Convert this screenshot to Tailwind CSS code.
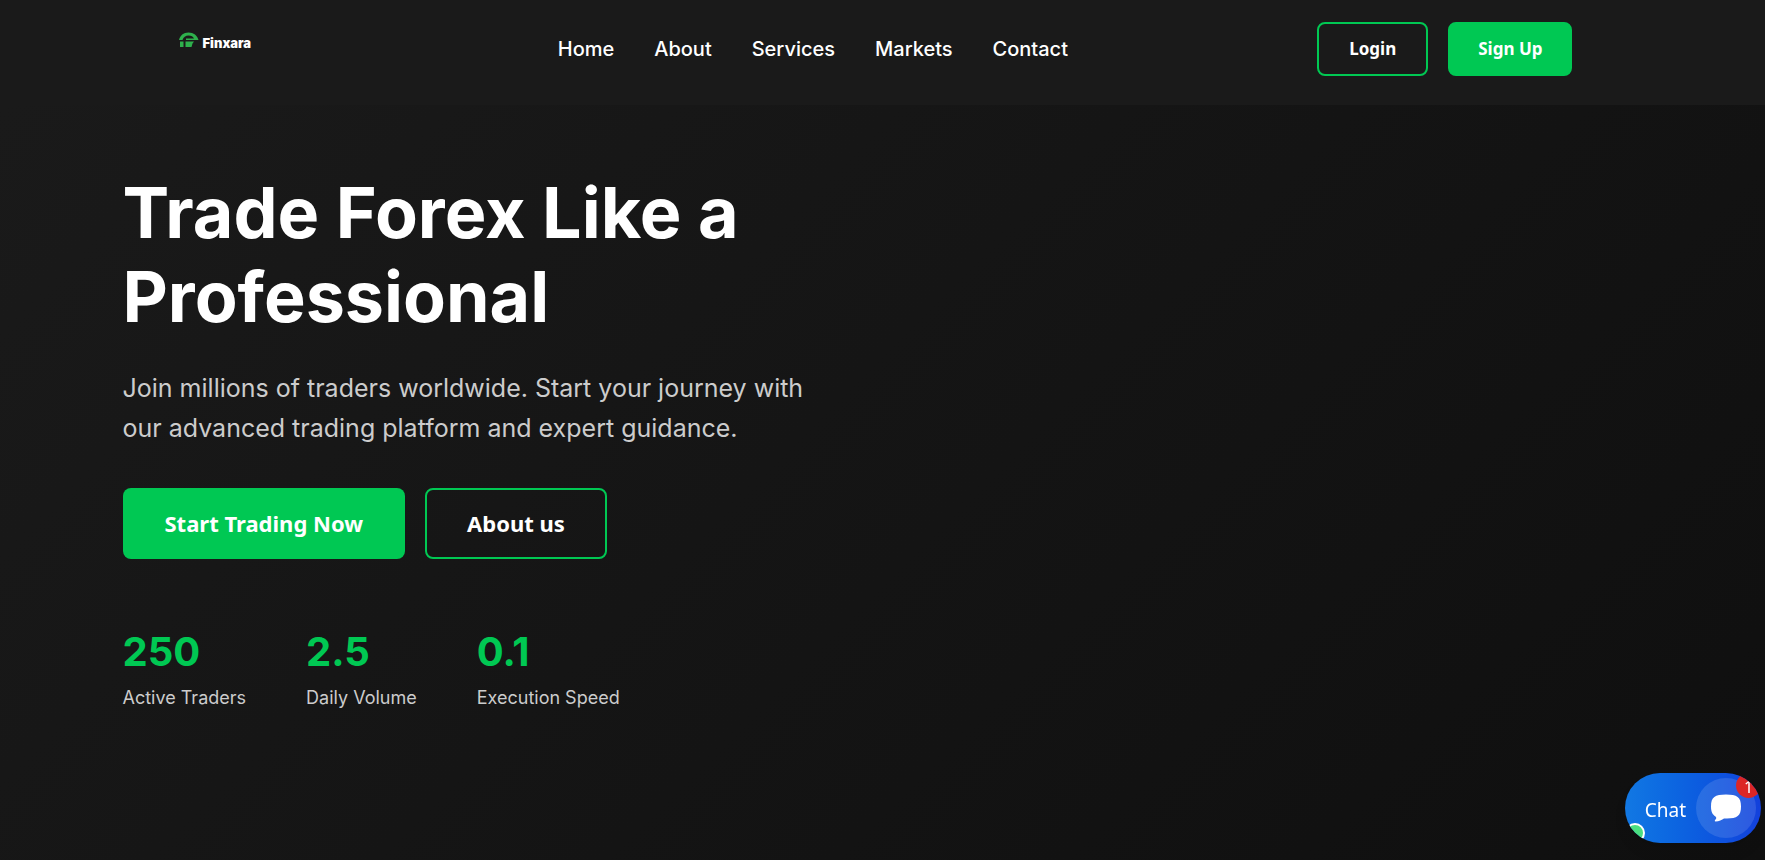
<!DOCTYPE html>
<html lang="en" class="h-full">
  <head>
    <meta charset="UTF-8" />
    <meta name="viewport" content="width=device-width, initial-scale=1.0" />
    <title>Finxara</title>
    <script src="https://cdn.jsdelivr.net/npm/@tailwindcss/browser@4"></script>
  </head>
  <body class="flex min-h-full flex-col bg-[#0f0f0f] font-['Inter',sans-serif] text-white">
    <header class="bg-[#1a1a1a]">
      <div class="mx-auto flex max-w-[1520px] items-center justify-between pt-[22px] pr-[70px] pb-[29px] pl-14">
        <a href="#" class="flex w-[130px] items-start gap-1 pb-4">
          <svg class="h-4 w-5" viewBox="0 0 20 16" fill="#2eb04c" aria-hidden="true">
            <path d="M0 8C1 3.500 4.500 0.500 9.500 0.500S18.500 3.500 19.500 8H7V6.500H15C14 4.500 12.500 3.500 9.500 3.500C6.500 3.500 4.500 5 3.500 8Z" />
            <path d="M1 9.500H4.500V15H1Z" />
            <path d="M6.500 9.500H15L13.500 11.500L12.500 15H6.500Z" />
          </svg>
          <span class="pt-[3px] text-[13px] leading-4 font-black">Finxara</span>
        </a>
        <nav class="flex items-center gap-10 text-xl leading-6 font-medium">
          <a href="#">Home</a>
          <a href="#about">About</a>
          <a href="#services">Services</a>
          <a href="#markets">Markets</a>
          <a href="#contact">Contact</a>
        </nav>
        <div class="flex gap-5 font-['Noto_Sans',sans-serif] text-[17px] font-bold">
          <button type="button" class="h-[54px] rounded-lg border-2 border-[#00c853] px-[30px]">Login</button>
          <button type="button" class="h-[54px] rounded-lg border-2 border-[#00c853] bg-[#00c853] px-7">Sign Up</button>
        </div>
      </div>
    </header>

    <main class="grow bg-linear-135 from-[#1a1a1a] to-[#0f0f0f]">
      <div class="mx-auto max-w-[1520px] pt-[66px]">
        <div class="max-w-[720px]">
          <h1 class="text-[70px] leading-[84px] font-bold">Trade Forex Like a Professional</h1>
          <p class="mt-[29px] text-[25px] leading-10 text-[#cccccc]">
            Join millions of traders worldwide. Start your journey with our advanced trading platform and expert guidance.
          </p>
          <div class="mt-10 flex gap-5 font-['Noto_Sans',sans-serif] text-[22px] font-bold">
            <button type="button" class="h-[71px] rounded-lg bg-[#00c853] px-[42px]">Start Trading Now</button>
            <button type="button" class="h-[71px] rounded-lg border-2 border-[#00c853] px-10">About us</button>
          </div>
          <dl class="mt-[61px] flex gap-[60px]">
            <div class="flex flex-col-reverse">
              <dt class="text-lg leading-7 text-[#cccccc]">Active Traders</dt>
              <dd class="text-[40px] leading-[64px] font-bold text-[#00c853]">250</dd>
            </div>
            <div class="flex flex-col-reverse">
              <dt class="text-lg leading-7 text-[#cccccc]">Daily Volume</dt>
              <dd class="text-[40px] leading-[64px] font-bold text-[#00c853]">2.5</dd>
            </div>
            <div class="flex flex-col-reverse">
              <dt class="text-lg leading-7 text-[#cccccc]">Execution Speed</dt>
              <dd class="text-[40px] leading-[64px] font-bold text-[#00c853]">0.1</dd>
            </div>
          </dl>
        </div>
      </div>
    </main>

    <!-- chat launcher -->
    <button type="button" class="fixed right-1 bottom-[17px] flex h-[70px] items-center gap-[10px] overflow-hidden rounded-full bg-linear-to-r from-[#1278e3] to-[#1340dc] pr-[5px] pl-5 shadow-lg">
      <span class="pt-1 font-['Noto_Sans',sans-serif] text-[19px]">Chat</span>
      <span class="flex size-[60px] items-center justify-center rounded-full bg-white/12">
        <svg class="h-7 w-[30px]" viewBox="0 0 30 28" fill="#fff" aria-hidden="true">
          <path d="M15 0.500C26 0.500 30 3 30 12.500C30 22 26 24.500 16 24.500H13C11 26 8 27.500 4.500 27.500C3.500 27.500 3.500 26.500 4.500 25.500C5.500 24.500 5.500 23.500 4.500 22.500C1.500 20.500 0 18 0 12.500C0 3 4 0.500 15 0.500Z" />
        </svg>
      </span>
      <span class="absolute top-0 right-0 flex size-[25px] items-center justify-center rounded-full bg-[#dc2626] pt-0.5 font-['Noto_Sans',sans-serif] text-base">1</span>
      <span class="absolute bottom-0 left-0 size-5 rounded-full border-2 border-white bg-[#4ade80]"></span>
    </button>
  </body>
</html>
